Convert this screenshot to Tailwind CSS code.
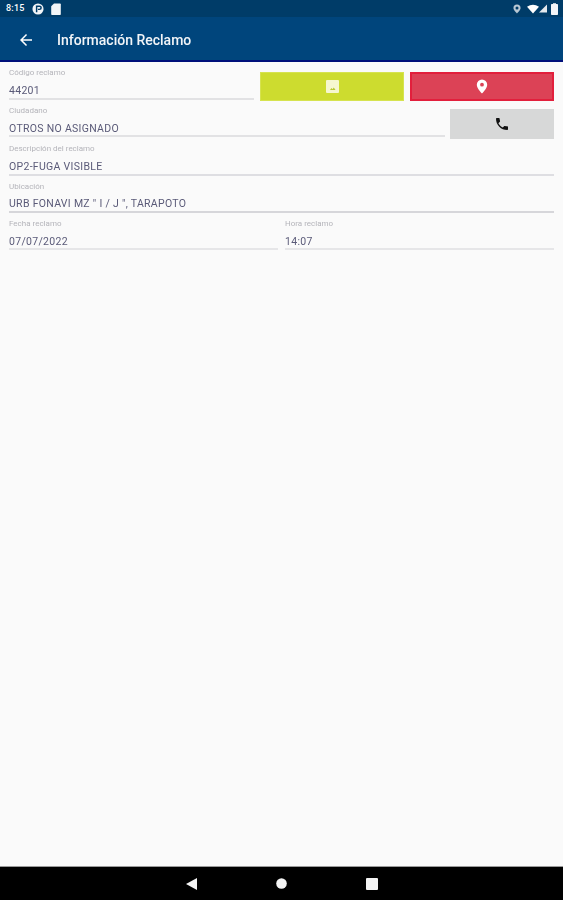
<!DOCTYPE html>
<html>
<head>
<meta charset="utf-8">
<script src="https://cdn.jsdelivr.net/npm/@tailwindcss/browser@4"></script>
</head>
<body class="w-[563px] h-[900px] overflow-hidden bg-[#fafafa] font-['Roboto',sans-serif] flex flex-col blur-[0.45px]">
  <div class="h-[17px] shrink-0 bg-[#003c68] flex items-center pl-[6px] pr-[5px] text-white">
    <span class="text-[9px] font-medium leading-none w-[20px] tracking-[0.2px]">8:15</span>
    <svg class="ml-[6px]" width="12" height="12" viewBox="0 0 13 13"><circle cx="6.5" cy="6.5" r="6" fill="#f2f5f8"/><path d="M5 10V3.5h3.2a1.6 1.6 0 0 1 0 3.4H6.5" fill="none" stroke="#003c68" stroke-width="1.6"/></svg>
    <svg class="ml-[7px]" width="10" height="12" viewBox="0 0 10 12"><path d="M3 .5h6a.8.8 0 0 1 .8.8v9.900a.8.8 0 0 1-.8.8H1a.8.8 0 0 1-.8-.8V3.300z" fill="#f2f5f8"/></svg>
    <div class="ml-auto flex items-center">
      <svg width="8" height="10" viewBox="0 0 9 11"><path d="M4.500.5a4 4 0 0 1 4 4c0 2.600-4 6-4 6s-4-3.400-4-6a4 4 0 0 1 4-4z" fill="#b8c7d3"/><circle cx="4.500" cy="4.500" r="1.700" fill="#003c68"/></svg>
      <svg class="ml-[6px]" width="12" height="10" viewBox="0 0 13 10"><path d="M0 2.500Q6.500-1.500 13 2.500L6.500 10z" fill="#fff"/></svg>
      <svg width="8" height="9" viewBox="0 0 9 9"><path d="M9 0v9H0z" fill="#e4e9ed"/></svg>
      <svg class="ml-[4px]" width="7" height="12" viewBox="0 0 7 12"><path d="M2 1V.3h3V1h1.200a.8.8 0 0 1 .8.8v9.400a.8.8 0 0 1-.8.8H.8a.8.8 0 0 1-.8-.8V1.800A.8.8 0 0 1 .8 1z" fill="#f2f5f8"/></svg>
    </div>
  </div>
  <header class="h-[45px] shrink-0 bg-[#00457c] border-b-2 border-[#00107a] flex items-center pt-[3px]">
    <svg class="ml-[17px]" width="18" height="18" viewBox="0 0 24 24" fill="#fff"><path d="M20 11H7.830l5.590-5.590L12 4l-8 8 8 8 1.410-1.410L7.830 13H20v-2z"/></svg>
    <h1 class="ml-[22px] text-[14px] font-medium text-[#f2f5f8] leading-none">Información Reclamo</h1>
  </header>
  <main class="flex-1 px-[9px] pt-[5px] flex flex-col">
    <div class="flex h-[38px]">
      <div class="w-[245px] border-b-2 border-[#e2e2e4] h-[33px]">
        <p class="text-[8px] leading-[10px] pt-[1px] text-[#b4b4ba]">Código reclamo</p>
        <p class="text-[10.500px] leading-[12px] mt-[7px] text-[#5a5a78] tracking-[0.3px]">44201</p>
      </div>
      <button class="ml-[6px] mt-[5px] w-[144px] h-[29px] bg-[#cddc2f] border border-[#d6e34f] flex items-center justify-center">
        <svg width="13" height="13" viewBox="0 0 13 13"><rect width="13" height="13" rx="1" fill="#f6f7cf"/><path d="M4 10l1.500-2 1 1.200 1.300-1.700L9.500 10z" fill="#b9c832"/></svg>
      </button>
      <button class="ml-[6px] mt-[5px] w-[144px] h-[29px] bg-[#dc4256] border-2 border-[#e21f3c] flex items-center justify-center">
        <svg width="12" height="15" viewBox="0 0 12 15"><path fill-rule="evenodd" d="M6 .5a5.200 5.200 0 0 1 5.200 5.200C11.200 9.500 6 14.500 6 14.500S.8 9.500.8 5.700A5.200 5.200 0 0 1 6 .5zm0 3.300a1.900 1.900 0 1 0 0 3.800 1.900 1.900 0 0 0 0-3.800z" fill="#fff"/></svg>
      </button>
    </div>
    <div class="flex h-[38px]">
      <div class="w-[436px] border-b-2 border-[#e2e2e4] h-[32px]">
        <p class="text-[8px] leading-[10px] pt-[1px] text-[#b4b4ba]">Ciudadano</p>
        <p class="text-[10.500px] leading-[12px] mt-[7px] text-[#5a5a78] tracking-[0.3px]">OTROS NO ASIGNADO</p>
      </div>
      <button class="ml-[5px] mt-[4px] w-[104px] h-[30px] bg-[#d7d8d8] flex items-center justify-center">
        <svg width="16" height="16" viewBox="0 0 24 24" fill="#111"><path d="M6.620 10.790c1.440 2.830 3.760 5.140 6.590 6.590l2.200-2.200c.27-.27.67-.36 1.020-.24 1.120.37 2.330.57 3.570.57.55 0 1 .45 1 1V20c0 .55-.45 1-1 1-9.390 0-17-7.610-17-17 0-.55.45-1 1-1h3.500c.55 0 1 .45 1 1 0 1.250.2 2.450.57 3.570.11.35.03.74-.25 1.020l-2.200 2.200z"/></svg>
      </button>
    </div>
    <div class="h-[38px]">
      <div class="border-b-2 border-[#dedee2] h-[33px]">
        <p class="text-[8px] leading-[10px] pt-[1px] text-[#b4b4ba]">Descripción del reclamo</p>
        <p class="text-[10.500px] leading-[12px] mt-[7px] text-[#5a5a78] tracking-[0.3px]">OP2-FUGA VISIBLE</p>
      </div>
    </div>
    <div class="h-[37px]">
      <div class="border-b-2 border-[#d6d6da] h-[32px]">
        <p class="text-[8px] leading-[10px] pt-[1px] text-[#b4b4ba]">Ubicación</p>
        <p class="text-[10.500px] leading-[12px] mt-[6px] text-[#5a5a78] tracking-[0.3px]">URB FONAVI MZ " I / J ", TARAPOTO</p>
      </div>
    </div>
    <div class="flex gap-[7px]">
      <div class="w-[269px] border-b-2 border-[#e6e6e8] h-[32px]">
        <p class="text-[8px] leading-[10px] pt-[1px] text-[#b4b4ba]">Fecha reclamo</p>
        <p class="text-[10.500px] leading-[12px] mt-[7px] text-[#5a5a78] tracking-[0.3px]">07/07/2022</p>
      </div>
      <div class="w-[269px] border-b-2 border-[#e6e6e8] h-[32px]">
        <p class="text-[8px] leading-[10px] pt-[1px] text-[#b4b4ba]">Hora reclamo</p>
        <p class="text-[10.500px] leading-[12px] mt-[7px] text-[#5a5a78] tracking-[0.3px]">14:07</p>
      </div>
    </div>
  </main>
  <nav class="h-[34px] shrink-0 bg-black border-t border-[#9a9a9a] flex items-center">
    <svg class="ml-[186px]" width="11" height="12" viewBox="0 0 11 12"><path d="M11 0v12L0 6z" fill="#f4f4f4"/></svg>
    <svg class="ml-[79px]" width="11" height="11" viewBox="0 0 11 11"><circle cx="5.500" cy="5.500" r="5.300" fill="#f4f4f4"/></svg>
    <svg class="ml-[79px]" width="12" height="12" viewBox="0 0 12 12"><rect width="12" height="12" rx="1" fill="#f4f4f4"/></svg>
  </nav>
</body>
</html>
